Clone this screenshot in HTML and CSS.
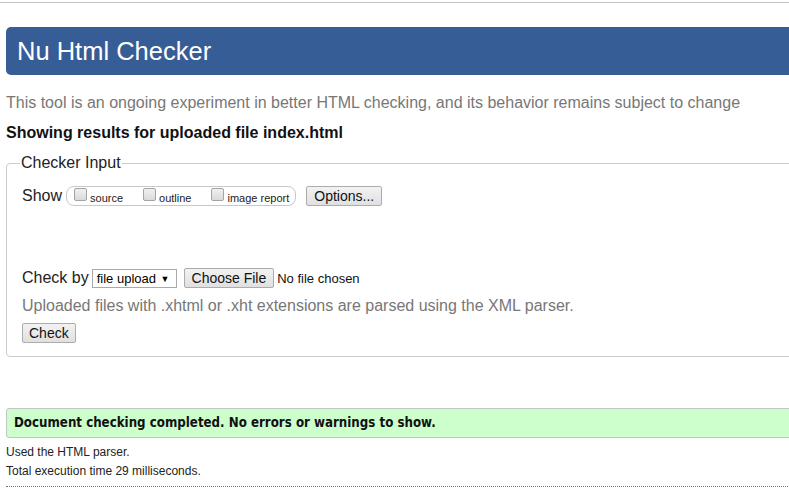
FILE: index.html
```html
<!DOCTYPE html>
<html>
<head>
<meta charset="utf-8">
<title>Nu Html Checker</title>
<link rel="stylesheet" href="styles.css">
</head>
<body>
<div class="topline"></div>
<div class="page">
  <h1 class="header">Nu Html Checker</h1>
  <p class="note">This tool is an ongoing experiment in better HTML checking, and its behavior remains subject to change</p>
  <p class="showing">Showing results for uploaded file index.html</p>
  <fieldset class="input">
    <legend class="legend">Checker Input</legend>
    <div class="row show-row">
      <span class="label">Show</span>
      <span class="pill">
        <span class="opt"><span class="cb"></span>source</span>
        <span class="opt"><span class="cb"></span>outline</span>
        <span class="opt"><span class="cb"></span>image report</span>
      </span>
      <span class="btn btn-options">Options...</span>
    </div>
    <div class="row check-row">
      <span class="label">Check by</span>
      <span class="select">file upload <span class="arrow">▼</span></span>
      <span class="btn btn-file">Choose File</span>
      <span class="nofile">No file chosen</span>
    </div>
    <p class="hint">Uploaded files with .xhtml or .xht extensions are parsed using the XML parser.</p>
    <div class="row"><span class="btn btn-check">Check</span></div>
  </fieldset>
  <div class="success">Document checking completed. No errors or warnings to show.</div>
  <p class="meta">Used the HTML parser.</p>
  <p class="meta">Total execution time 29 milliseconds.</p>
  <div class="dotted"></div>
</div>
</body>
</html>
```
FILE: styles.css
```css
html { overflow: hidden; }
body {
  margin: 0;
  font-family: "Liberation Sans", Arial, sans-serif;
  color: #000;
  background: #fff;
}
.topline {
  margin-top: 2px;
  border-top: 1px solid #c4c4c4;
}
.page {
  width: 840px;
  padding-left: 6px;
}
.header {
  margin: 24px 0 0;
  height: 48px;
  line-height: 48px;
  background: #365d95;
  color: #fff;
  font-weight: normal;
  font-size: 25.5px;
  padding-left: 11px;
  border-radius: 5px;
}
.note {
  margin: 19px 0 0;
  font-size: 16px;
  line-height: 18px;
  color: #777;
}
.showing {
  margin: 12px 0 0;
  font-size: 16px;
  line-height: 18px;
  font-weight: bold;
  color: #111;
}
.input {
  margin: 12px 0 0;
  padding: 14px 15px 13px;
  border: 1px solid #ccc;
  border-radius: 4px;
}
.legend {
  font-size: 16px;
  line-height: 18px;
  padding: 0 1px;
  margin-left: -2px;
  color: #222;
}
.row {
  display: flex;
  align-items: center;
}
.label {
  font-size: 16px;
  color: #222;
}
.show-row .label { margin-right: 4px; }
.pill {
  display: flex;
  align-items: center;
  height: 18px;
  border: 1px solid #c8c8c8;
  border-radius: 8px;
  padding: 0 6px 0 7px;
  gap: 20px;
}
.opt {
  display: flex;
  align-items: center;
  font-size: 11px;
  color: #222;
  padding-top: 3px;
}
.cb {
  width: 11px;
  height: 11px;
  border: 1px solid #a4a4a4;
  border-radius: 2px;
  background: linear-gradient(#f0f0f0, #dadada);
  margin-right: 3px;
  margin-top: -6px;
}
.btn {
  display: inline-block;
  font-size: 14px;
  color: #111;
  border: 1px solid #acacac;
  border-radius: 2px;
  background: linear-gradient(#f2f2f2, #e0e0e0);
  height: 18px;
  line-height: 18px;
  padding: 0 7px;
}
.btn-options { margin-left: 10px; width: 60px; }
.check-row { margin-top: 62px; }
.check-row .label { margin-right: 3px; }
.select {
  font-size: 13px;
  border: 1px solid #a9a9a9;
  height: 17px;
  line-height: 17px;
  padding: 0 6px 0 4px;
  color: #000;
  background: #fff;
}
.arrow { font-size: 9px; margin-left: 1px; vertical-align: 1px; }
.btn-file { margin-left: 7px; }
.nofile { font-size: 13px; margin-left: 3px; color: #111; }
.hint {
  margin: 9px 0 0;
  font-size: 16px;
  line-height: 18px;
  color: #777;
}
.btn-check { margin-top: 8px; padding: 0 6px; }
.success {
  margin-top: 51px;
  height: 28px;
  line-height: 28px;
  background: #ccffcc;
  border: 1px solid #bfc9bf;
  border-radius: 3px;
  padding-left: 7px;
  font-family: "DejaVu Sans Condensed", "DejaVu Sans", sans-serif;
  font-weight: bold;
  font-size: 13.2px;
  color: #111;
}
.meta {
  margin: 0;
  font-size: 12px;
  line-height: 19px;
  color: #222;
}
.success + .meta { margin-top: 5px; }
.dotted {
  margin-top: 5px;
  border-top: 1px dotted #777;
}
```
